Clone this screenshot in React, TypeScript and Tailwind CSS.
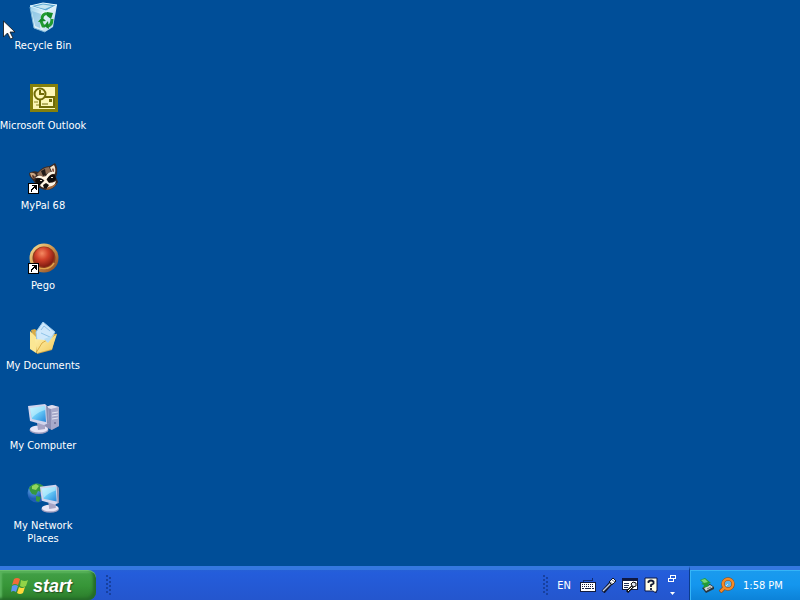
import type { ReactNode } from "react";

function Shortcut() {
  return (
    <g shapeRendering="crispEdges">
      <rect x="1" y="21" width="11" height="11" fill="#000" />
      <rect x="2" y="22" width="9" height="9" fill="#fff" />
      <path d="M5 23h5v5h-1v-1h-1v-1h-1v1h-1v1h-1v2h-1v-3h1v-1h1v-1h1v-1h-2z" fill="#000" />
    </g>
  );
}

function RecycleBin() {
  return (
    <svg viewBox="0 0 32 32" className="size-8" aria-hidden="true">
      <defs>
        <linearGradient id="bin" x1="0" x2="1" y2="1">
          <stop offset="0" stopColor="#8fcbe8" />
          <stop offset=".45" stopColor="#e6f5fb" />
          <stop offset="1" stopColor="#a9cfe6" />
        </linearGradient>
      </defs>
      <path d="M3 4 16 1 30 3 26 25 18 30 7 26z" fill="url(#bin)" />
      <path d="M3 4 16 1 30 3 19 9z" fill="#5fa9d2" stroke="#dff6ff" />
      <path d="M8 4.500 16 2.500 25 4 18 7z" fill="#c7e7f2" />
      <path d="m5 9 9 3-1 14-5-2z" fill="#69b2d9" opacity=".5" />
      <path d="M3 5 7 26 18 30" fill="none" stroke="#80b9da" />
      <path d="M16 10 15 28" stroke="#fff" opacity=".7" />
      <g fill="none" stroke="#219b31" strokeWidth="3">
        <path d="M15 16c1-5 5-5 7-3M25 17c0 5-2 7-5 7M14 19l2 5h2" />
      </g>
      <path d="m20 10 6 1-2 6-4-3zM21 19l-4 5 5 3zM11 20l4-5 4 4z" fill="#168b28" />
    </svg>
  );
}

function Outlook() {
  return (
    <svg viewBox="0 0 32 32" className="size-8" aria-hidden="true">
      <rect x="3" y="2" width="28" height="28" fill="#85800c" />
      <rect x="6" y="5" width="22" height="22" fill="#fdf7b5" />
      <path d="M13 15h14v10H13z" fill="#fdf7b5" stroke="#706b08" strokeWidth="2" />
      <path d="M22 17h3v3h-3z" fill="#706b08" />
      <path d="M15 22h6" stroke="#706b08" strokeWidth="1" />
      <circle cx="13" cy="12" r="5.500" fill="#fdf7b5" stroke="#706b08" strokeWidth="2" />
      <path d="M13 8v4h4" fill="none" stroke="#706b08" strokeWidth="2" />
      <path d="M7 20h4M9 23h3" stroke="#8c861c" />
    </svg>
  );
}

function Raccoon() {
  return (
    <svg viewBox="0 0 32 32" className="size-8" aria-hidden="true">
      <path d="M2 11q5-3 9-1 5-6 12-6l5-3q3 4 2 11l-1 3 2 5q-3 7-11 8-8 0-12-7l-4-5q-2-2-2-5z" fill="#3b2a24" />
      <path d="M3 11q4-1 6 2l-2 4q-3-1-4-6z" fill="#c9a684" />
      <path d="M5 13q2 0 3 2l-1 2q-2-1-2-4z" fill="#5a3528" />
      <path d="M23 5.500 27 3q2 3 1 8l-2 1z" fill="#f3e3cb" />
      <path d="M25 7q2-2 2 2l-1 2z" fill="#7e4738" />
      <path d="M10 12q5-6 12-7l2 5-5 2-2 4-5-1z" fill="#8b6c56" />
      <path d="m14 9 4-2 1 6-3 1z" fill="#211a18" />
      <path d="M8 16q4-4 8-1l3-1q3-5 8-4l1 2q-4-1-7 4l-3 3q-4-4-10-3z" fill="#fff5e4" />
      <path d="M9 17q5-2 8 2l-2 4q-4 1-7-4zM20 17q3-5 8-4l1 4q-3 4-8 3z" fill="#0e0c0c" />
      <path d="M13 18h2v1h-2zM24 15h2v1h-2z" fill="#e8dccc" />
      <path d="m16 20 3-3 3 4q4 0 7-2-1 6-9 7-6 0-7-3z" fill="#fff5e4" />
      <path d="m16 23 3-2 3 2-2 3h-3z" fill="#120f0e" />
      <path d="M19 28q8-1 11-7-4 3-9 4z" fill="#a0673f" />
      <Shortcut />
    </svg>
  );
}

function Pego() {
  return (
    <svg viewBox="0 0 32 32" className="size-8" aria-hidden="true">
      <defs>
        <radialGradient id="ball" cx=".4" cy=".32" r=".7">
          <stop offset="0" stopColor="#f58a62" />
          <stop offset=".45" stopColor="#d2422a" />
          <stop offset="1" stopColor="#7d190f" />
        </radialGradient>
        <linearGradient id="ring" x1="0" x2="1" y2="1">
          <stop offset="0" stopColor="#f8e7a0" />
          <stop offset=".4" stopColor="#d9a256" />
          <stop offset="1" stopColor="#853f1b" />
        </linearGradient>
      </defs>
      <circle cx="17" cy="16" r="14.500" fill="url(#ring)" />
      <circle cx="17" cy="16" r="11.500" fill="#8f3b1c" />
      <circle cx="17" cy="15" r="10" fill="url(#ball)" />
      <path d="M8 23a12 12 0 0 0 19-2" fill="none" stroke="#e0a24c" strokeWidth="1.500" />
      <Shortcut />
    </svg>
  );
}

function Documents() {
  return (
    <svg viewBox="0 0 32 32" className="size-8" aria-hidden="true">
      <defs>
        <linearGradient id="folder" x2="1" y2="1">
          <stop offset="0" stopColor="#fff3b0" />
          <stop offset="1" stopColor="#f1c95c" />
        </linearGradient>
      </defs>
      <path d="m4 8 4-1 4 4 17 1-4 16-15 4z" fill="#d8ab48" />
      <path d="m9 10 7-10 12 10-8 12-10-3z" fill="#cfe8fb" stroke="#9ccbed" />
      <path d="m14 8 3-4 6 5M14 11l9 4" stroke="#8fc3e8" fill="none" />
      <path d="m3 9 6 6v16l-6-4z" fill="#fbe794" />
      <path d="m8 17 9 1 13-6-5 15-15 4z" fill="url(#folder)" />
      <path d="m9 31 6-10 15-9" fill="none" stroke="#d9ac45" />
      <path d="m17 17 10-4-6 8z" fill="#b4dcf5" />
    </svg>
  );
}

function Monitor() {
  return (
    <g>
      <ellipse cx="12" cy="28" rx="9.500" ry="4" fill="#9e9ebf" />
      <ellipse cx="12" cy="27" rx="9" ry="3.500" fill="#e9e6f6" />
      <path d="m10 21 8 1v5l-7 1z" fill="#a7a5c5" />
      <path d="M1 4 18 2 21 5 22 21 17 23 3 19z" fill="#d2d5ed" />
      <path d="M3 6 18 4 19 20 5 17z" fill="url(#screen)" />
      <path d="M3 6 18 4 18 8C12 10 9 12 5 16z" fill="#d6fbff" opacity=".5" />
      <path d="M19 3 21 5 22 21 20 22z" fill="#8a8fb0" />
    </g>
  );
}

function Computer() {
  return (
    <svg viewBox="0 0 32 32" className="size-8" aria-hidden="true">
      <defs>
        <linearGradient id="screen" x2="1" y2="1">
          <stop offset="0" stopColor="#b9efff" />
          <stop offset=".5" stopColor="#67c9f7" />
          <stop offset="1" stopColor="#2785d8" />
        </linearGradient>
      </defs>
      <path d="m18 5 7-2 7 2v19l-7 4-7-3z" fill="#8d8fb4" />
      <path d="m24 7 8-2v19l-8 4z" fill="#a7a9ca" />
      <path d="m18 5 7-2 7 2-8 2z" fill="#dedef0" />
      <path d="m25 11 6-1M25 14l6-1M25 17l6-1" stroke="#e3e4f2" />
      <path d="M27 21h2" stroke="#52557c" />
      <Monitor />
    </svg>
  );
}

function Network() {
  return (
    <svg viewBox="0 0 32 32" className="size-8" aria-hidden="true">
      <defs>
        <radialGradient id="globe" cx=".35" cy=".3">
          <stop offset="0" stopColor="#74bdf1" />
          <stop offset="1" stopColor="#1f5db4" />
        </radialGradient>
      </defs>
      <circle cx="10" cy="11" r="9.500" fill="url(#globe)" />
      <path d="M2 6q4-6 11-4 3 1 5 4l-4 4-3-1-2 4-4-1-2-3zM9 14l5 1-2 5-3-1z" fill="#36983f" />
      <path d="m5 4 4-2 3 2-3 4-4-1z" fill="#91d65d" />
      <g transform="translate(12 1) scale(.93)"><Monitor /></g>
    </svg>
  );
}

function DesktopIcon({ label, children }: { label: string; children: ReactNode }) {
  return (
    <li className="h-20">
      <button type="button" className="flex w-full flex-col items-center gap-[5px] pt-0.5 text-center leading-[13px]">
        {children}
        <span className="whitespace-pre">{label}</span>
      </button>
    </li>
  );
}

function Grip() {
  return (
    <svg viewBox="0 0 5 20" className="h-5 w-[5px] shrink-0" aria-hidden="true" shapeRendering="crispEdges">
      <path d="M0 1h2M0 5h2M0 9h2M0 13h2M0 17h2M3 3h2M3 7h2M3 11h2M3 15h2M3 19h2" stroke="#17409f" strokeWidth="2" />
    </svg>
  );
}

function Flag() {
  return (
    <svg viewBox="0 0 18 18" className="size-[18px]" aria-hidden="true">
      <path d="M3 2q3-2 6 0L7 8Q4 6 1 8z" fill="#f26b39" />
      <path d="M10 3q4 2 7 0l-2 6q-3 2-6 0z" fill="#91d447" />
      <path d="M1 9q3-2 6 0l-2 6q-3-2-5 0z" fill="#5d96f2" />
      <path d="M8 10q3 2 6 0l-2 6q-3 2-6 0z" fill="#ffd83b" />
    </svg>
  );
}

function Keyboard() {
  return (
    <svg viewBox="0 0 16 16" className="size-4" aria-hidden="true" shapeRendering="crispEdges">
      <path d="M3 5V3h9V1" fill="none" stroke="#122c70" />
      <path d="M0 5h16v10H0z" fill="#111b3c" />
      <path d="M1 6h14v8H1z" fill="#fff" />
      <path d="M2 7.500h12M2 9.500h12" stroke="#17213e" strokeDasharray="1 1" />
      <path d="M2 11.500h2m1 0h6m1 0h2" stroke="#17213e" />
    </svg>
  );
}

function Microphone() {
  return (
    <svg viewBox="0 0 16 16" className="size-4" aria-hidden="true">
      <path d="m2 15 8-9" stroke="#101831" strokeWidth="4" />
      <path d="m2 14 8-8" stroke="#c3cde0" strokeWidth="1.500" />
      <path d="m8 5 4-4 3 3-4 4z" fill="#fff" stroke="#111827" />
      <path d="m9 5 3 2m-1-4 3 2" stroke="#6e7484" />
    </svg>
  );
}

function Writing() {
  return (
    <svg viewBox="0 0 16 16" className="size-4" aria-hidden="true">
      <path d="M0 1h16v12H0z" fill="#101941" />
      <path d="M1 4h14v8H1z" fill="#fff" />
      <path d="M2 6.500h5M2 8.500h5M2 10.500h4" stroke="#24335a" />
      <path d="m5 15 6-6" stroke="#111" strokeWidth="3" />
      <path d="m6 14 5-5" stroke="#fff" />
      <path d="m9 7 2-2 3 1v3l-3 1z" fill="#e2e6ef" stroke="#111" />
    </svg>
  );
}

function Help() {
  return (
    <svg viewBox="0 0 16 16" className="size-4" aria-hidden="true">
      <path d="M2 1h12v13h-1v2l-3-2H2z" fill="#fffde7" stroke="#0b1644" />
      <path d="M5.500 6V4.500q2.500-2 5 0v2L8 8v2M8 11v2" fill="none" stroke="#111831" strokeWidth="1.800" />
    </svg>
  );
}

function SafelyRemove() {
  return (
    <svg viewBox="0 0 16 16" className="size-4" aria-hidden="true">
      <path d="m3 11 8-4 4 3v2l-8 4z" fill="#29353e" />
      <path d="m5 11 6-3 3 2-7 4z" fill="#d1d6d2" />
      <path d="m8 12 4-2" stroke="#6c7477" />
      <path d="m1 3 5-2 6 5-3 1 1 2-6 2 1-3-3-1 2-1z" fill="#239b36" />
      <path d="m2 3 4-1 3 3-4 1z" fill="#78d778" />
    </svg>
  );
}

function Search() {
  return (
    <svg viewBox="0 0 16 16" className="size-4" aria-hidden="true">
      <path d="m6 10-5 5" stroke="#8a4a1c" strokeWidth="4" />
      <circle cx="9" cy="7" r="5" fill="#5cb4ea" stroke="#8a4a1c" strokeWidth="3.500" />
      <circle cx="9" cy="7" r="5" fill="none" stroke="#f58a26" strokeWidth="2.500" />
      <path d="m6 10-4.500 4.500" stroke="#f58a26" strokeWidth="2.500" />
      <path d="m7 9 2-2" stroke="#e9e4d8" />
    </svg>
  );
}

const toolButton = "flex size-4 items-center justify-center";

export default function App() {
  return (
    <div className="flex min-h-screen flex-col bg-[#004e98] font-['DejaVu_Sans_Condensed','DejaVu_Sans',sans-serif] text-[11px] text-white">
      <main className="relative flex-1">
        <ul className="w-[86px]">
          <DesktopIcon label="Recycle Bin"><RecycleBin /></DesktopIcon>
          <DesktopIcon label="Microsoft Outlook"><Outlook /></DesktopIcon>
          <DesktopIcon label="MyPal 68"><Raccoon /></DesktopIcon>
          <DesktopIcon label="Pego"><Pego /></DesktopIcon>
          <DesktopIcon label="My Documents"><Documents /></DesktopIcon>
          <DesktopIcon label="My Computer"><Computer /></DesktopIcon>
          <DesktopIcon label={"My Network\nPlaces"}><Network /></DesktopIcon>
        </ul>
        <svg viewBox="0 0 12 20" className="absolute top-5 left-[3px] h-5 w-3" aria-hidden="true">
          <path d="M.5 1v16l4-4 3 6 2.500-1-3-6H12z" fill="#fff" stroke="#111" strokeWidth=".8" />
        </svg>
      </main>

      <footer className="flex h-[34px] items-stretch bg-linear-to-b from-[#2864d0] from-0% via-[#245ddb] via-20% to-[#2456ce]">
        <div className="flex flex-1 border-t-4 border-[#3478e0]">
          <button type="button" className="flex w-24 items-center gap-1 rounded-r-lg border-t border-[#6ac06b] bg-linear-to-b from-[#43a047] via-[#379638] to-[#2b7c2b] pl-[11px] font-['Liberation_Sans',Arial,sans-serif] text-[18px] font-bold italic shadow-[inset_-3px_-2px_3px_#256b29,inset_2px_2px_2px_#5ab45d] [text-shadow:1px_1px_1px_#24511f]">
            <Flag />
            <span className="leading-5">start</span>
          </button>
          <div className="flex flex-1 items-center pl-[10px]"><Grip /></div>
          <div className="flex items-center gap-[5px] pr-[9px]">
            <Grip />
            <button type="button" className="w-[22px] pt-0.5 text-center">EN</button>
            <button type="button" aria-label="Keyboard" className={toolButton}><Keyboard /></button>
            <button type="button" aria-label="Microphone" className={toolButton}><Microphone /></button>
            <button type="button" aria-label="Handwriting" className={toolButton}><Writing /></button>
            <button type="button" aria-label="Help" className={toolButton}><Help /></button>
            <div className="flex h-5 w-4 flex-col items-center justify-between">
              <button type="button" aria-label="Restore">
                <svg viewBox="0 0 8 7" className="h-[7px] w-2" aria-hidden="true" shapeRendering="crispEdges">
                  <path d="M2.500 3V.5h5v3H6M.5 3.500h5v3h-5z" fill="none" stroke="#fff" />
                </svg>
              </button>
              <button type="button" aria-label="Options">
                <svg viewBox="0 0 5 3" className="h-[3px] w-[5px]" aria-hidden="true"><path d="M0 0h5L2.500 3z" fill="#fff" /></svg>
              </button>
            </div>
          </div>
        </div>
        <div className="flex w-[111px] items-center border-t-4 border-t-[#3478e0] border-l border-l-[#0b3c8c] bg-linear-to-b from-[#1a9bee] via-[#1496ee] to-[#0c82d8] pl-[9px] shadow-[inset_1px_1px_0_#35b5f7]">
          <button type="button" aria-label="Safely remove hardware" className="mr-1"><SafelyRemove /></button>
          <button type="button" aria-label="Search"><Search /></button>
          <time className="ml-2 pt-0.5">1:58 PM</time>
        </div>
      </footer>
    </div>
  );
}
